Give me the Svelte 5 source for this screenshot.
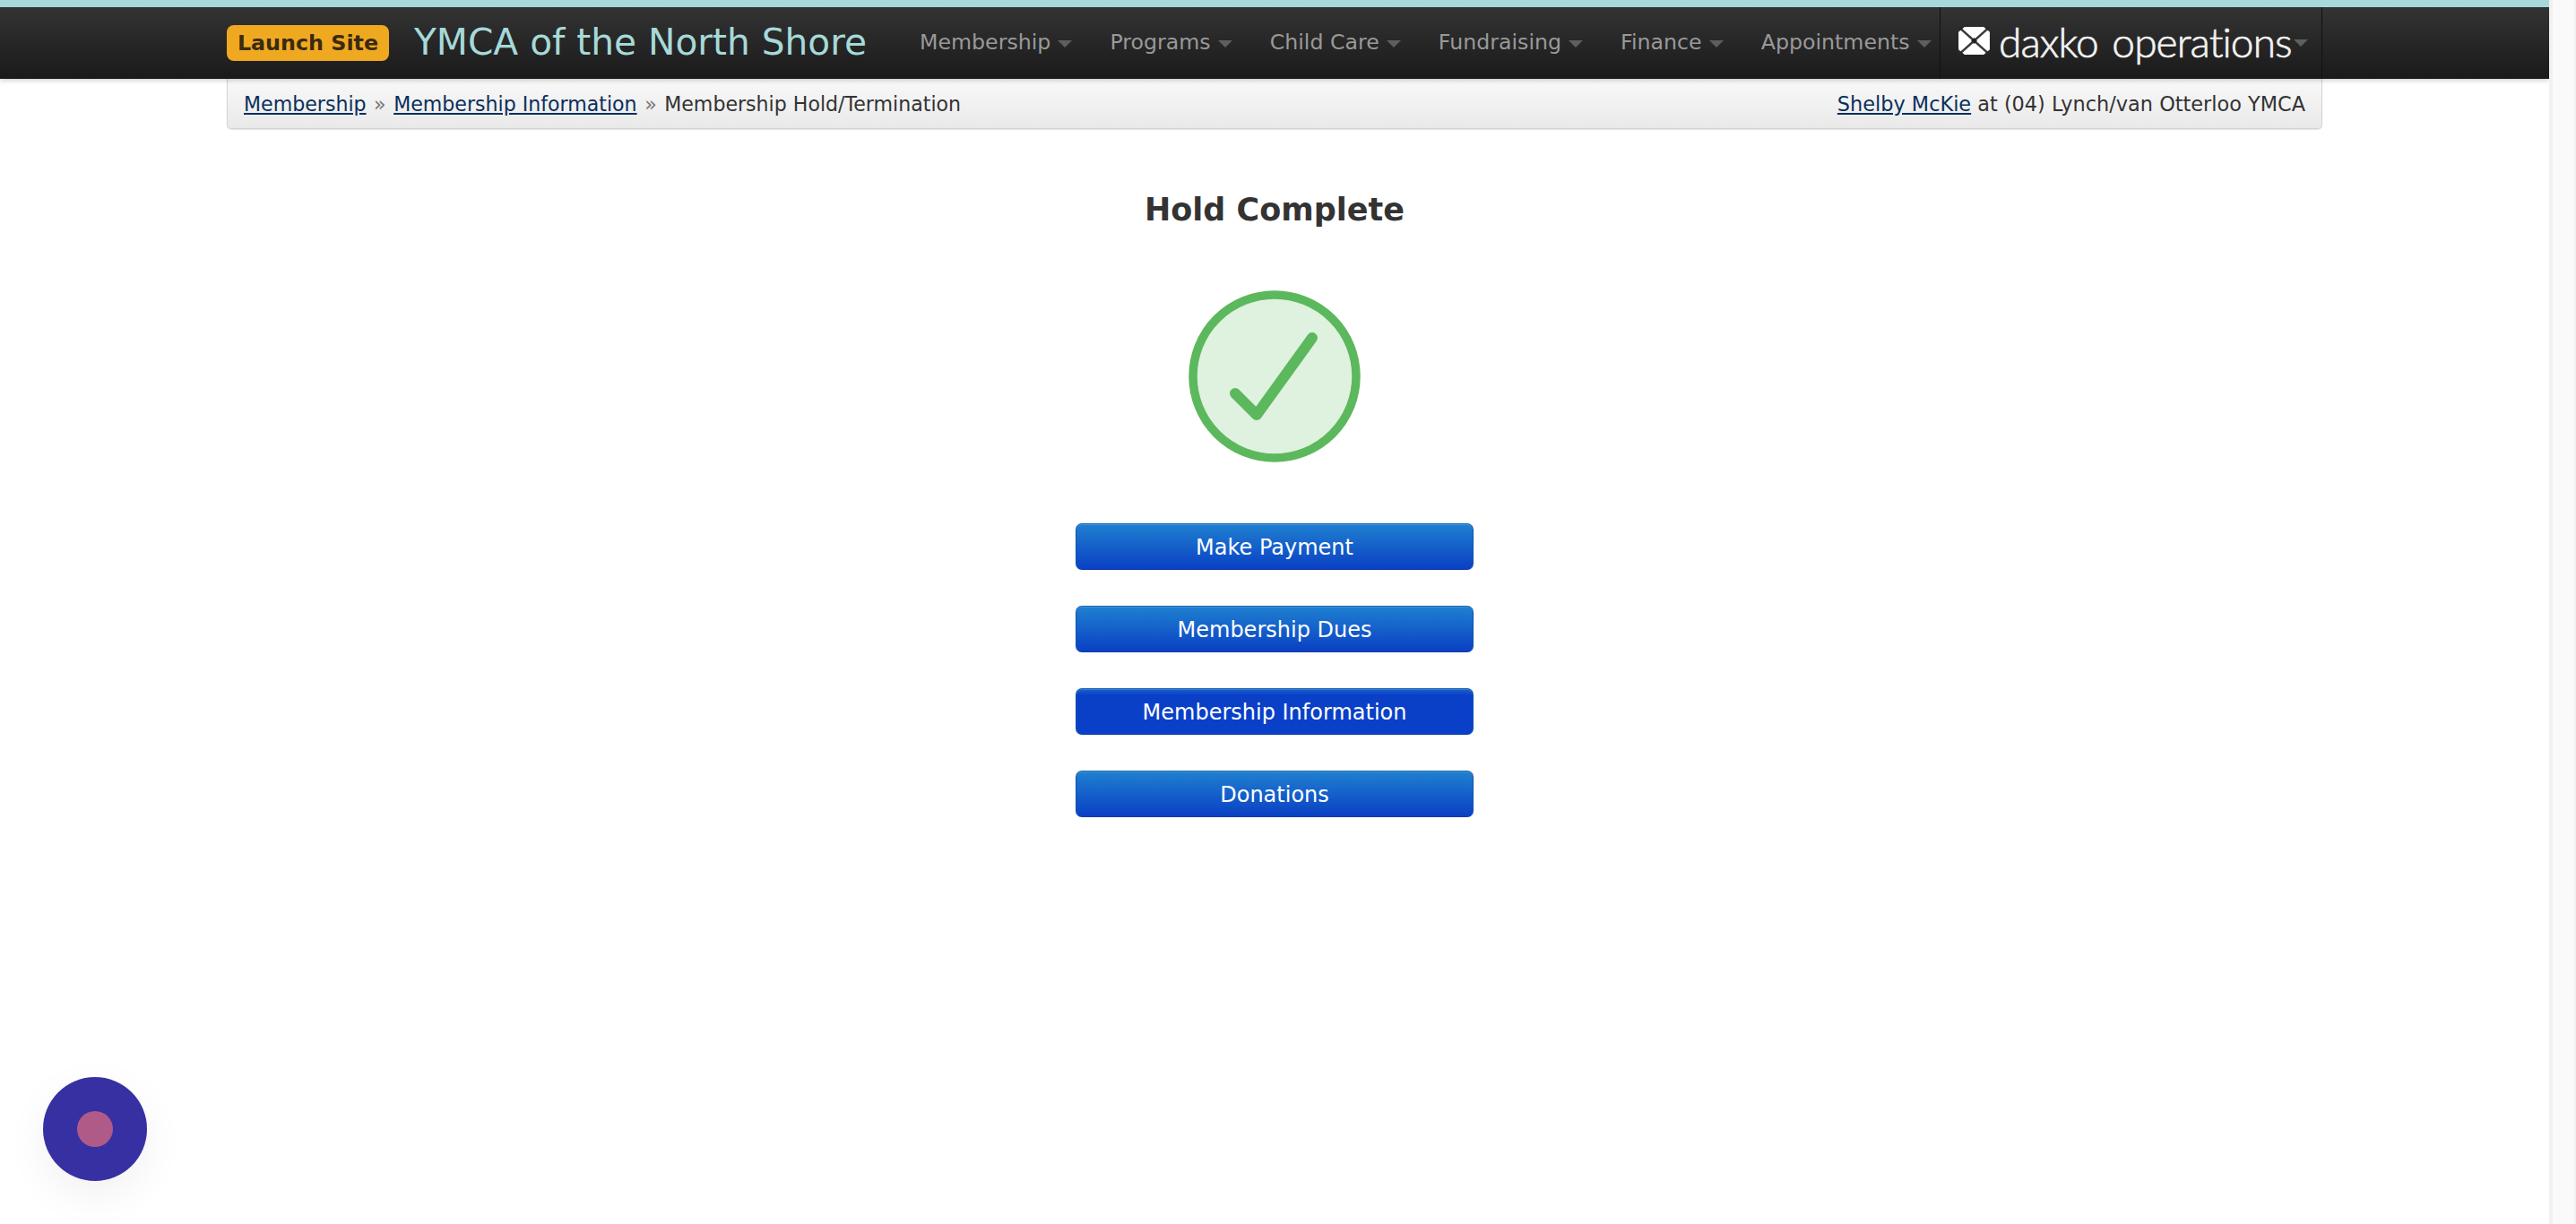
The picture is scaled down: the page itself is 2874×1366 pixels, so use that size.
<script>
	const navItems = ['Membership', 'Programs', 'Child Care', 'Fundraising', 'Finance', 'Appointments'];
	const actions = ['Make Payment', 'Membership Dues', 'Membership Information', 'Donations'];
</script>

<div class="page">
	<header class="topbar">
		<div class="topbar-inner">
			<a class="launch" href="#launch">Launch Site</a>
			<span class="org">YMCA of the North Shore</span>
			<nav class="nav">
				{#each navItems as item}
					<a class="nav-item" href="#nav">{item}<span class="caret"></span></a>
				{/each}
			</nav>
			<div class="brand">
				<svg class="brand-mark" viewBox="0 0 36 32" aria-hidden="true">
					<rect width="36" height="32" rx="3" fill="#fff" />
					<path d="M-1 -1 L37 33 M37 -1 L-1 33" fill="none" stroke="#3a3a3a" stroke-width="2.6" />
					<path d="M14.5 16 L18 12.5 L21.5 16 L18 19.5 Z" fill="#222" />
					<path d="M0 0 L7 0 L0 6 Z M36 0 L29 0 L36 6 Z M0 32 L7 32 L0 26 Z M36 32 L29 32 L36 26 Z" fill="#262626" />
				</svg>
				<span class="brand-name">daxko operations</span>
				<span class="caret"></span>
			</div>
		</div>
	</header>

	<div class="crumbs">
		<div class="trail">
			<a href="#m">Membership</a>
			<span class="sep">»</span>
			<a href="#i">Membership Information</a>
			<span class="sep">»</span>
			<span>Membership Hold/Termination</span>
		</div>
		<div class="who"><a href="#u">Shelby McKie</a> at (04) Lynch/van Otterloo YMCA</div>
	</div>

	<main class="content">
		<h1>Hold Complete</h1>
		<svg class="check" viewBox="0 0 192 192" aria-hidden="true">
			<circle cx="96" cy="96" r="91" fill="#dff1df" stroke="#5cb85c" stroke-width="9.5" />
			<path d="M52 115 L76 139 L138 53" fill="none" stroke="#5cb85c" stroke-width="12" stroke-linecap="round" stroke-linejoin="round" />
		</svg>
		<div class="actions">
			{#each actions as label}
				<button class="btn" class:active={label === 'Membership Information'}>{label}</button>
			{/each}
		</div>
	</main>

	<div class="bubble"><span class="bubble-dot"></span></div>
</div>

<style>
	:global(body) {
		margin: 0;
		background: #fff;
	}
	.page {
		min-height: 1366px;
		box-sizing: border-box;
		margin-right: 30px;
		font-family: 'DejaVu Sans', Verdana, sans-serif;
		color: #333;
		position: relative;
		overflow: hidden;
	}
	.page::after {
		content: '';
		position: fixed;
		top: 0;
		right: 0;
		bottom: 0;
		width: 24px;
		background: #fafafa;
		border-left: 4px solid #f1f1f1;
		border-right: 2px solid #f1f1f1;
	}
	.topbar {
		height: 80px;
		border-top: 8px solid #a6d9d9;
		background: linear-gradient(#333333, #1a1a1a);
		box-shadow: 0 1px 6px rgba(0, 0, 0, 0.25);
		position: relative;
		z-index: 2;
	}
	.topbar-inner {
		width: 2338px;
		height: 80px;
		margin: 0 auto;
		display: flex;
		align-items: center;
	}
	.launch {
		width: 181px;
		height: 40px;
		line-height: 40px;
		text-align: center;
		background: #efa921;
		border-radius: 8px;
		color: #3b2a10;
		font-size: 23.8px;
		font-weight: 700;
		text-decoration: none;
	}
	.org {
		margin-left: 28px;
		width: 564px;
		font-size: 40.7px;
		color: #a6d9d9;
		white-space: nowrap;
		margin-bottom: 2px;
	}
	.nav {
		display: flex;
		flex: 1;
		height: 80px;
		align-items: center;
		gap: 42px;
	}
	.nav-item {
		color: #999;
		font-size: 23.7px;
		text-decoration: none;
		white-space: nowrap;
		margin-bottom: 2px;
	}
	.caret {
		display: inline-block;
		margin-left: 8px;
		vertical-align: middle;
		border-left: 8px solid transparent;
		border-right: 8px solid transparent;
		border-top: 8px solid #5e5e5e;
	}
	.brand {
		width: 427px;
		height: 80px;
		box-sizing: border-box;
		border-left: 1px solid #111;
		border-right: 1px solid #111;
		padding-left: 20px;
		display: flex;
		align-items: center;
		color: #f2f2f2;
	}
	.brand-mark {
		width: 35px;
		height: 31px;
		margin-bottom: 6px;
	}
	.brand-name {
		margin-left: 10px;
		font-family: Lato, sans-serif;
		font-weight: 300;
		font-size: 46px;
		letter-spacing: -0.9px;
		word-spacing: 4px;
		-webkit-text-stroke: 0.7px #f2f2f2;
		white-space: nowrap;
		margin-bottom: 4px;
	}
	.brand .caret {
		margin-left: 2px;
	}
	.crumbs {
		width: 2338px;
		height: 56px;
		box-sizing: border-box;
		margin: 0 auto;
		padding: 0 18px;
		display: flex;
		align-items: center;
		justify-content: space-between;
		background: linear-gradient(#f9f9f9, #e9e9e9);
		border: 1px solid #d4d4d4;
		border-top: 0;
		border-radius: 0 0 5px 5px;
		box-shadow: 0 1px 1px rgba(0, 0, 0, 0.12);
		font-size: 22.1px;
		color: #333;
	}
	.crumbs a {
		color: #0b2f5b;
	}
	.who {
		font-size: 22.4px;
	}
	.sep {
		color: #777;
		margin: 0 1.5px;
	}
	.content {
		display: flex;
		flex-direction: column;
		align-items: center;
	}
	h1 {
		margin: 68px 0 0;
		font-size: 35px;
		line-height: 44px;
		font-weight: 700;
		color: #333;
	}
	.check {
		width: 192px;
		height: 192px;
		margin-top: 68px;
	}
	.actions {
		display: flex;
		flex-direction: column;
		gap: 40px;
		margin-top: 68px;
	}
	.btn {
		width: 444px;
		height: 52px;
		padding: 2px 0 0;
		border: 1px solid #0c52ad;
		border-top-color: #1565b0;
		border-bottom-color: #0a3aa8;
		border-radius: 7px;
		background: linear-gradient(#1f80d0, #0a40c4);
		box-shadow: inset 0 1px rgba(255, 255, 255, 0.15);
		color: #fff;
		font-family: inherit;
		font-size: 24px;
	}
	.btn.active {
		background: linear-gradient(#1a60cc, #0a40c8 14%);
	}
	.bubble {
		position: fixed;
		left: 48px;
		top: 1202px;
		width: 116px;
		height: 116px;
		border-radius: 50%;
		background: #3730a3;
		box-shadow: 0 16px 48px rgba(0, 0, 0, 0.06);
		display: flex;
		align-items: center;
		justify-content: center;
	}
	.bubble-dot {
		width: 40px;
		height: 40px;
		border-radius: 50%;
		background: #b05a88;
	}
</style>
